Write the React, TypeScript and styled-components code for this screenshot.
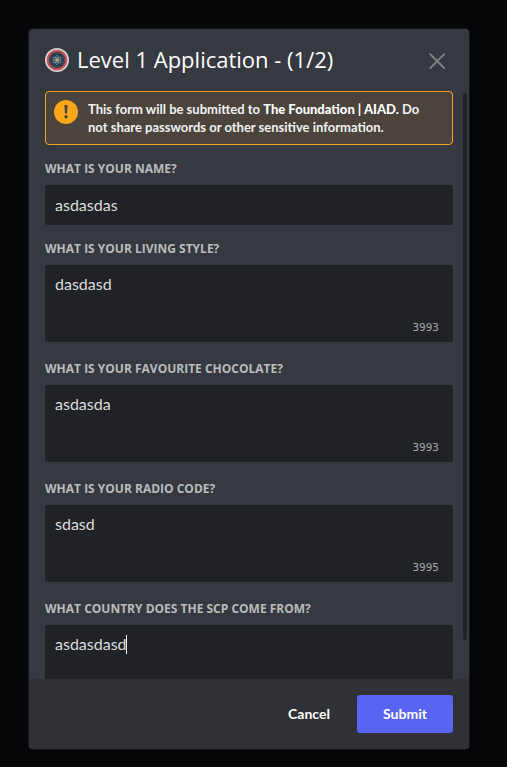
import React, { useId, useLayoutEffect, useRef, useState } from "react";
import styled, { createGlobalStyle } from "styled-components";

const GlobalStyle = createGlobalStyle`
  *, *::before, *::after { box-sizing: border-box; }
  html, body { margin: 0; background: #060709; }
  body { font-family: Lato, "Open Sans", sans-serif; color: #fff; }
  button, input, textarea { font-family: inherit; }
`;

const Backdrop = styled.div`
  display: flex;
  height: 100vh;
  padding: 29px 38px 18px 29px;
  background: #060709;
`;

const Modal = styled.form`
  display: flex;
  flex: 1;
  flex-direction: column;
  min-width: 0;
  overflow: hidden;
  border-radius: 4px;
  background: #36393f;
  box-shadow: 0 0 0 1px rgba(32, 34, 37, 0.6), 0 2px 10px rgba(0, 0, 0, 0.2);
`;

const Header = styled.header`
  display: flex;
  align-items: center;
  gap: 8px;
  height: 62px;
  padding: 0 20px 0 16px;
  flex: none;
`;

const Title = styled.h1`
  flex: 1;
  margin: 0;
  padding-bottom: 2px;
  font-family: "Open Sans", sans-serif;
  font-size: 22px;
  font-weight: 400;
  line-height: 30px;
  white-space: nowrap;
`;

const CloseButton = styled.button`
  display: flex;
  padding: 0;
  border: 0;
  background: none;
  color: #84868a;
  cursor: pointer;
`;

const BodyFrame = styled.div`
  position: relative;
  display: flex;
  flex: 1;
  min-height: 0;
`;

const Body = styled.div`
  flex: 1;
  min-width: 0;
  overflow-y: auto;
  scrollbar-width: none;
  padding: 0 16px;
`;

const ScrollThumb = styled.div`
  position: absolute;
  top: 2px;
  right: 2px;
  width: 4px;
  height: 93%;
  border-radius: 2px;
  background: #202225;
`;

const Notice = styled.div`
  display: flex;
  gap: 10px;
  margin-bottom: 16px;
  padding: 8px 16px 8px 8px;
  border: 1px solid #faa61a;
  border-radius: 4px;
  background: #4a443c;
`;

const NoticeText = styled.p`
  flex: 1;
  margin: 0;
  color: #f2f2f2;
  font-size: 13px;
  font-weight: 700;
  line-height: 18px;

  strong { color: #fff; font-weight: 900; }
`;

const Field = styled.div<{ $gap: number }>`
  display: flex;
  flex-direction: column;
  gap: 8px;
  margin-bottom: ${(p) => p.$gap}px;
`;

const Label = styled.label`
  color: #b9bbbe;
  font-family: "Open Sans", sans-serif;
  font-size: 12px;
  font-weight: 700;
  line-height: 16px;
  text-transform: uppercase;
`;

const TextInput = styled.input`
  width: 100%;
  height: 40px;
  padding: 0 10px 2px;
  border: 0;
  border-radius: 3px;
  outline: 0;
  background: #202225;
  color: #dcddde;
  font-size: 16px;
`;

const AreaBox = styled.div`
  position: relative;
  display: flex;
  height: 77px;
  border-radius: 3px;
  background: #202225;
`;

const TextArea = styled.textarea`
  flex: 1;
  min-width: 0;
  padding: 9px 10px;
  border: 0;
  outline: 0;
  resize: none;
  background: transparent;
  color: #dcddde;
  font-size: 16px;
  line-height: 20px;
`;

const Counter = styled.span`
  position: absolute;
  right: 14px;
  bottom: 7px;
  color: #a3a6aa;
  font-family: "DejaVu Sans Mono", monospace;
  font-size: 11px;
  line-height: 14px;
`;

const Caret = styled.span`
  position: absolute;
  top: 10px;
  width: 1px;
  height: 19px;
  background: #fff;
`;

const Footer = styled.footer`
  display: flex;
  flex: none;
  justify-content: flex-end;
  padding: 16px;
  background: #2f3136;
`;

const Button = styled.button<{ $primary?: boolean }>`
  width: 96px;
  height: 38px;
  padding: 0 0 2px;
  border: 0;
  border-radius: 3px;
  background: ${(p) => (p.$primary ? "#5865f2" : "transparent")};
  color: #fff;
  font-size: 14px;
  font-weight: 700;
  cursor: pointer;
`;

const Emblem = () => (
  <svg width="24" height="24" viewBox="0 0 24 24" aria-hidden="true">
    <circle cx="12" cy="12" r="12" fill="#d3cfcf" />
    <circle cx="12" cy="12" r="9.2" fill="#25394a" stroke="#c94b55" strokeWidth="2.2" />
    <path d="M8 5.2h8l4 6.8-4 6.8H8L4 12z" fill="#263d4c" stroke="#496070" strokeWidth=".7" />
    <g fill="none" stroke="#7b8b8c" strokeWidth=".8">
      <ellipse cx="12" cy="12" rx="1.9" ry="4.6" />
      <ellipse cx="12" cy="12" rx="1.9" ry="4.6" transform="rotate(60 12 12)" />
      <ellipse cx="12" cy="12" rx="1.9" ry="4.6" transform="rotate(120 12 12)" />
    </g>
    <circle cx="12" cy="12" r="1.4" fill="#b4ae8d" />
  </svg>
);

const CloseIcon = () => (
  <svg width="24" height="24" viewBox="0 0 24 24" aria-hidden="true">
    <path d="M4.7 5.7l15 15M19.7 5.7l-15 15" fill="none" stroke="currentColor" strokeWidth="1.8" />
  </svg>
);

const WarningIcon = () => (
  <svg width="24" height="24" viewBox="0 0 24 24" aria-hidden="true">
    <circle cx="12" cy="12" r="12" fill="#faa61a" />
    <path d="M10.4 5h3.2l-.5 8.4h-2.2z" fill="#4a443c" />
    <circle cx="12" cy="16.7" r="1.7" fill="#4a443c" />
  </svg>
);

type AreaProps = { label: string; initial: string; limit?: number; active?: boolean };

function AreaField({ label, initial, limit, active }: AreaProps) {
  const id = useId();
  const ref = useRef<HTMLTextAreaElement>(null);
  const [value, setValue] = useState(initial);
  const [caretLeft, setCaretLeft] = useState(0);

  useLayoutEffect(() => {
    const context = document.createElement("canvas").getContext("2d");
    if (!active || !ref.current || !context) return;
    const style = getComputedStyle(ref.current);
    context.font = `${style.fontSize} ${style.fontFamily}`;
    setCaretLeft(Math.floor(parseInt(style.paddingLeft, 10) + context.measureText(value).width));
  }, [active, value]);

  return (
    <Field $gap={19}>
      <Label htmlFor={id}>{label}</Label>
      <AreaBox>
        <TextArea id={id} ref={ref} value={value} onChange={(e) => setValue(e.target.value)} />
        {limit && <Counter>{limit - value.length}</Counter>}
        {active && <Caret style={{ left: caretLeft }} />}
      </AreaBox>
    </Field>
  );
}

export default function App() {
  return (
    <>
      <GlobalStyle />
      <Backdrop>
        <Modal role="dialog" aria-labelledby="title" onSubmit={(e) => e.preventDefault()}>
          <Header>
            <Emblem />
            <Title id="title">Level 1 Application - (1/2)</Title>
            <CloseButton type="button" aria-label="Close"><CloseIcon /></CloseButton>
          </Header>
          <BodyFrame>
            <Body>
              <Notice>
                <WarningIcon />
                <NoticeText>
                  This form will be submitted to <strong>The Foundation | AIAD.</strong> Do not share
                  passwords or other sensitive information.
                </NoticeText>
              </Notice>
              <Field $gap={16}>
                <Label htmlFor="name">What is your name?</Label>
                <TextInput id="name" type="text" defaultValue="asdasdas" />
              </Field>
              <AreaField label="What is your living style?" initial="dasdasd" limit={4000} />
              <AreaField label="What is your favourite chocolate?" initial="asdasda" limit={4000} />
              <AreaField label="What is your radio code?" initial="sdasd" limit={4000} />
              <AreaField label="What country does the SCP come from?" initial="asdasdasd" active />
            </Body>
            <ScrollThumb />
          </BodyFrame>
          <Footer>
            <Button type="button">Cancel</Button>
            <Button type="submit" $primary>Submit</Button>
          </Footer>
        </Modal>
      </Backdrop>
    </>
  );
}
